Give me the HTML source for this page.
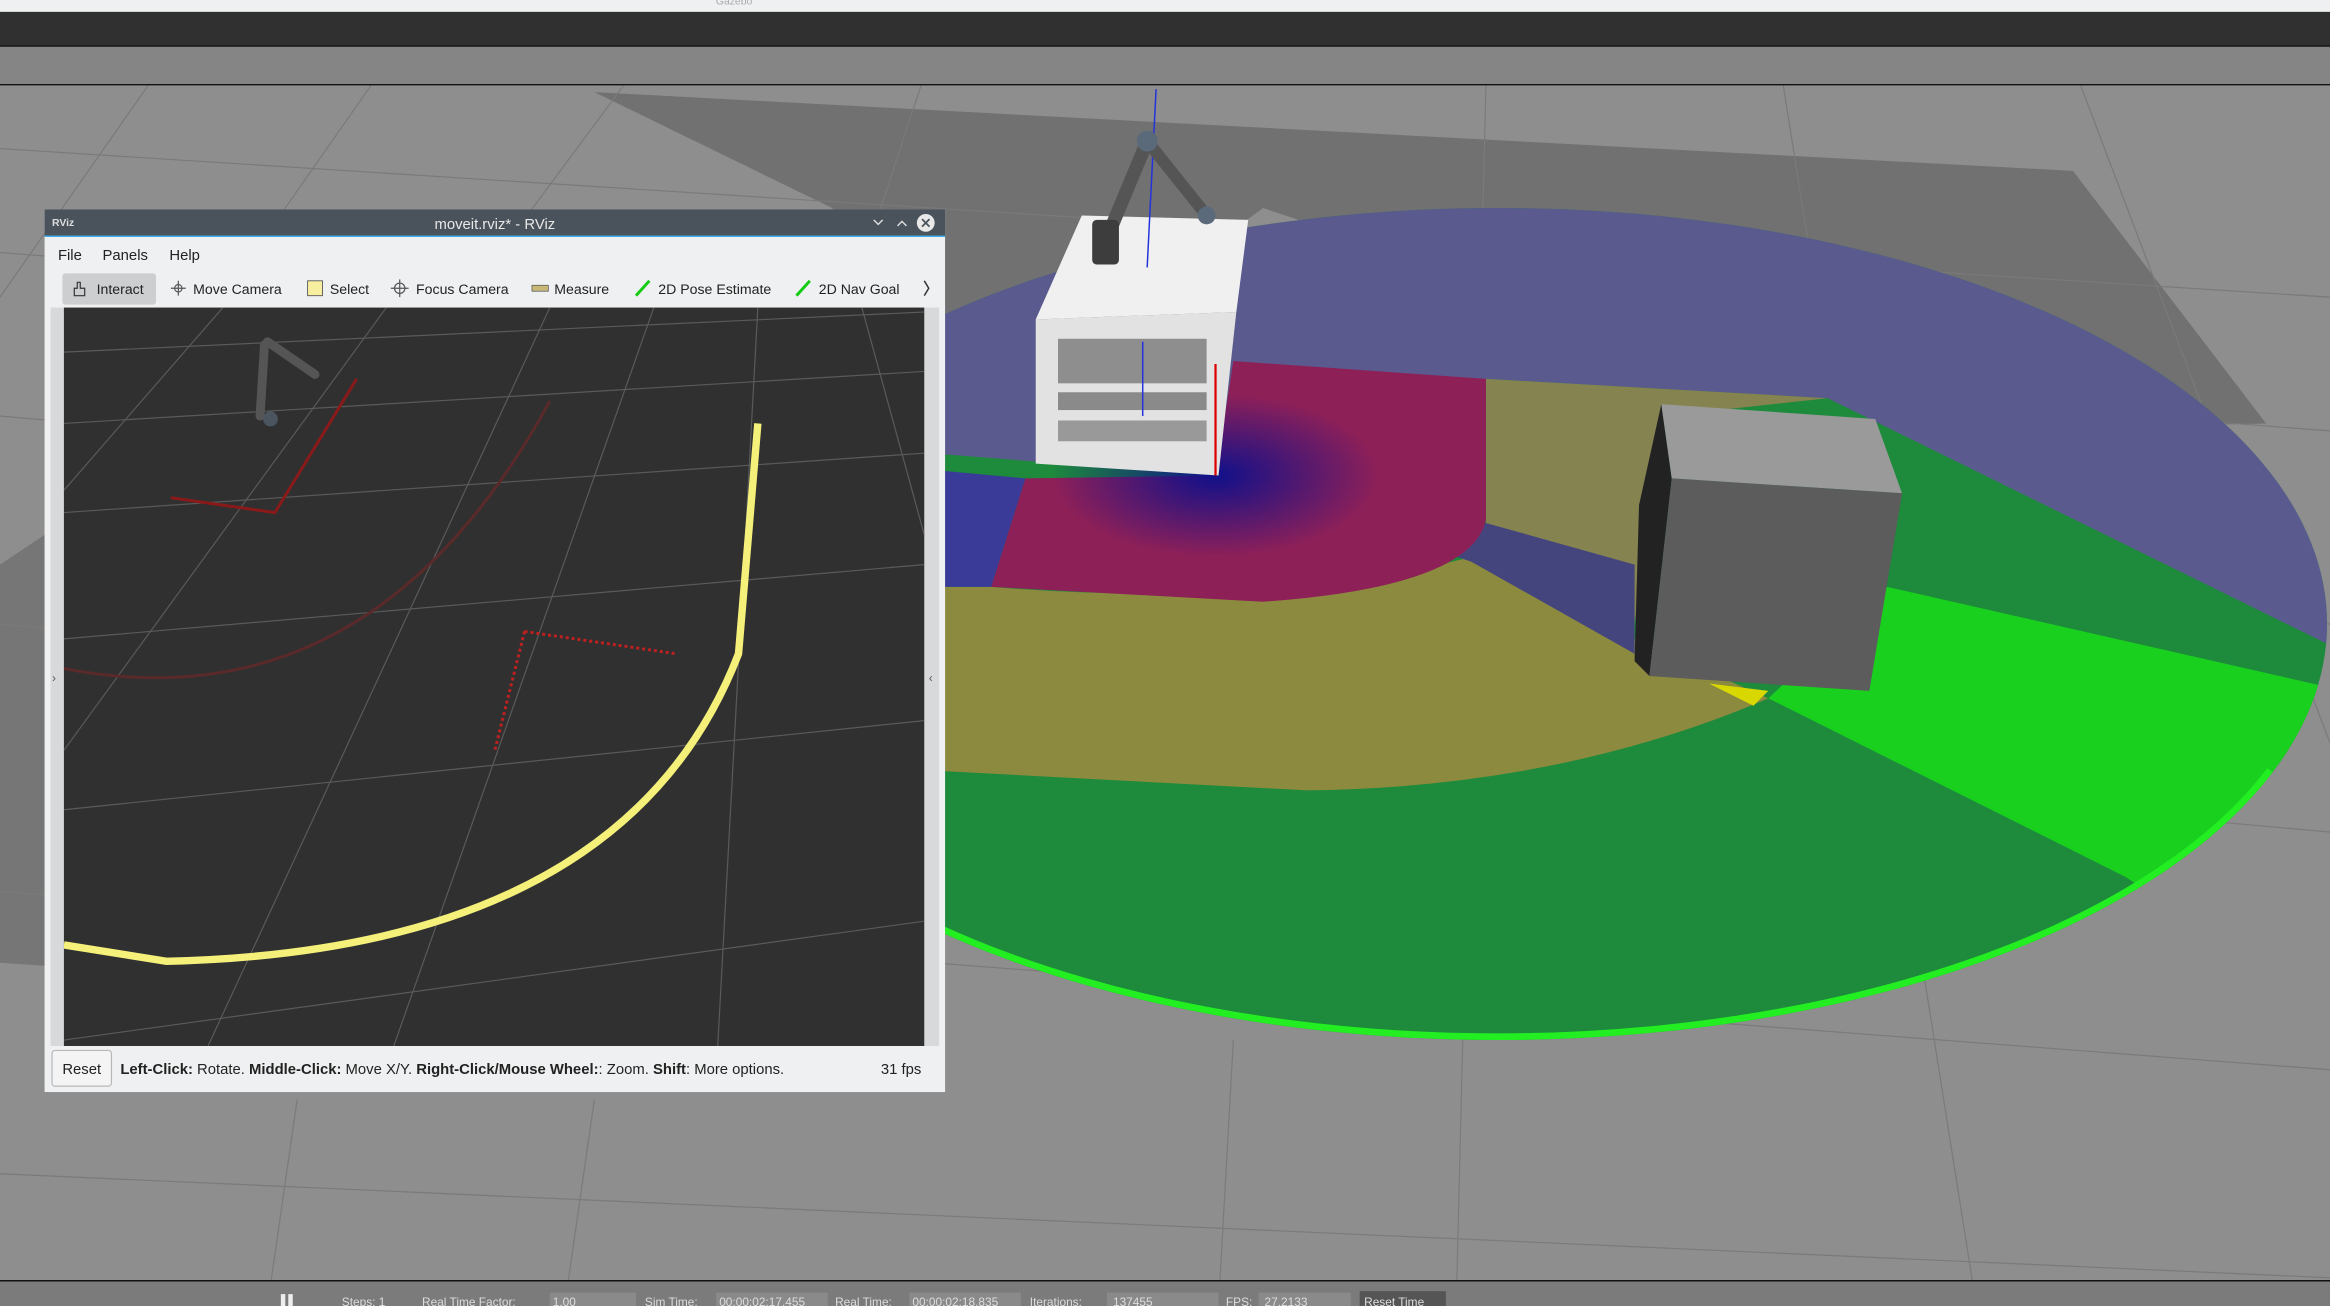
<!DOCTYPE html>
<html><head><meta charset="utf-8"><style>
html,body{margin:0;padding:0;background:#8e8e8e;overflow:hidden}
svg{display:block}
text{font-family:"Liberation Sans",sans-serif}
</style></head><body>
<svg width="2330" height="1306" viewBox="0 0 1568 879" preserveAspectRatio="none" xmlns="http://www.w3.org/2000/svg">
<defs>
<clipPath id="disk"><ellipse cx="1008" cy="420" rx="558" ry="280"/></clipPath>
<clipPath id="vp"><rect x="43" y="207" width="579" height="497"/></clipPath>
<radialGradient id="cb" cx="0.5" cy="0.5" r="0.5"><stop offset="0" stop-color="#10108a" stop-opacity="1"/><stop offset="1" stop-color="#10108a" stop-opacity="0"/></radialGradient>
</defs>
<rect x="0" y="0" width="1568" height="879" fill="#8e8e8e"/>
<polygon points="400,62 1395,115 1525,285 1300,290 850,140 700,250 640,300 560,140" fill="#717171"/>
<polygon points="0,380 30,360 30,650 0,648" fill="#767676"/>
<g stroke="#7a7a7a" stroke-width="0.8" fill="none">
<line x1="0" y1="100" x2="1568" y2="200"/><line x1="0" y1="170" x2="1568" y2="290"/>
<line x1="0" y1="280" x2="1568" y2="420"/><line x1="0" y1="420" x2="1568" y2="560"/>
<line x1="0" y1="600" x2="1568" y2="720"/><line x1="0" y1="790" x2="1568" y2="860"/>
<line x1="100" y1="57" x2="0" y2="200"/><line x1="250" y1="57" x2="80" y2="300"/>
<line x1="420" y1="57" x2="240" y2="300"/><line x1="620" y1="57" x2="540" y2="300"/>
<line x1="1000" y1="57" x2="980" y2="879"/><line x1="1200" y1="57" x2="1330" y2="879"/>
<line x1="1400" y1="57" x2="1568" y2="500"/><line x1="180" y1="879" x2="200" y2="740"/>
<line x1="380" y1="879" x2="400" y2="740"/><line x1="820" y1="879" x2="830" y2="700"/>
</g>
<rect x="0" y="0" width="1568" height="8" fill="#eff0f1"/>
<text x="494" y="3" font-size="7" fill="#aaa" text-anchor="middle">Gazebo</text>
<rect x="0" y="8" width="1568" height="23" fill="#303030"/>
<rect x="0" y="31" width="1568" height="26" fill="#858585"/>
<line x1="0" y1="31" x2="1568" y2="31" stroke="#111" stroke-width="1"/>
<line x1="0" y1="57" x2="1568" y2="57" stroke="#111" stroke-width="1"/>
<g clip-path="url(#disk)">
<rect x="400" y="100" width="1200" height="700" fill="#1d8a3c"/>
<polygon points="560,300 818,320 1000,255 1230,268 1600,450 1600,100 560,100" fill="#5a5a8e"/>
<polygon points="1270,395 1600,470 1600,700 1430,590 1190,470" fill="#1ad01e"/>
<path d="M560,395 L667,395 Q850,410 990,375 L1100,430 L1190,470 Q1050,530 880,532 L560,515 Z" fill="#8c8a3e"/>
<polygon points="1000,255 1230,268 1120,280 1100,420 1000,355" fill="#858350"/>
<polygon points="818,320 1000,352 1100,380 1100,440 990,378" fill="#45457e"/>
<path d="M818,320 L830,243 L1000,255 L1000,350 Q990,395 850,405 L667,395 L690,322 Z" fill="#8e2058"/>
<ellipse cx="818" cy="320" rx="110" ry="55" fill="url(#cb)"/>
<polygon points="560,310 690,322 667,395 560,395" fill="#3a3a98"/>
<polygon points="1150,460 1190,465 1180,475" fill="#d8d800"/>
<ellipse cx="1008" cy="420" rx="558" ry="280" fill="none" stroke="#22ee22" stroke-width="9" stroke-dasharray="0 120 1200 3000" pathLength="3000"/>
</g>
<polygon points="1118,272 1125,322 1110,455 1100,445 1103,340" fill="#222"/>
<polygon points="1118,272 1262,282 1280,332 1125,322" fill="#9a9a9a"/>
<polygon points="1125,322 1280,332 1258,465 1110,455" fill="#5c5c5c"/>
<polygon points="697,215 728,145 840,148 832,210" fill="#f0f0f0"/>
<polygon points="697,215 832,210 820,320 697,312" fill="#e2e2e2"/>
<rect x="712" y="228" width="100" height="30" fill="#8e8e8e"/>
<rect x="712" y="264" width="100" height="12" fill="#8a8a8a"/>
<rect x="712" y="283" width="100" height="14" fill="#999"/>
<line x1="778" y1="60" x2="772" y2="180" stroke="#2233dd" stroke-width="1"/>
<line x1="769" y1="230" x2="769" y2="280" stroke="#2233dd" stroke-width="1"/>
<line x1="818" y1="245" x2="818" y2="320" stroke="#dd0000" stroke-width="1.5"/>
<g stroke="#555" stroke-linecap="round" fill="none">
<line x1="745" y1="160" x2="772" y2="95" stroke-width="9"/>
<line x1="772" y1="95" x2="812" y2="145" stroke-width="8"/>
</g>
<rect x="735" y="148" width="18" height="30" rx="3" fill="#3d3d3d"/>
<circle cx="772" cy="95" r="7" fill="#5a6a7a"/><circle cx="812" cy="145" r="6" fill="#5a6a7a"/>
<rect x="0" y="862" width="1568" height="17" fill="#7b7b7b"/>
<line x1="0" y1="862" x2="1568" y2="862" stroke="#111" stroke-width="1"/>
<g font-size="8" fill="#ddd">
<rect x="189" y="871" width="3" height="8" fill="#eee"/><rect x="194" y="871" width="3" height="8" fill="#eee"/>
<text x="230" y="879">Steps: 1</text><text x="284" y="879">Real Time Factor:</text>
<rect x="370" y="870" width="58" height="9" fill="#8a8a8a"/><text x="372" y="879">1.00</text>
<text x="434" y="879">Sim Time:</text><rect x="482" y="870" width="75" height="9" fill="#8a8a8a"/><text x="484" y="879">00:00:02:17.455</text>
<text x="562" y="879">Real Time:</text><rect x="612" y="870" width="75" height="9" fill="#8a8a8a"/><text x="614" y="879">00:00:02:18.835</text>
<text x="693" y="879">Iterations:</text><rect x="745" y="870" width="75" height="9" fill="#8a8a8a"/><text x="749" y="879">137455</text>
<text x="825" y="879">FPS:</text><rect x="847" y="870" width="62" height="9" fill="#8a8a8a"/><text x="851" y="879">27.2133</text>
<rect x="915" y="869" width="58" height="10" fill="#555"/><text x="918" y="879">Reset Time</text>
</g>
<rect x="30" y="141" width="606" height="594" fill="#eff0f1"/>
<rect x="30" y="141" width="606" height="18" fill="#4a525b"/>
<line x1="30" y1="159" x2="636" y2="159" stroke="#3daee9" stroke-width="1"/>
<text x="35" y="152" font-size="7" fill="#ddd" font-weight="bold">RViz</text>
<text x="333" y="154" font-size="10" fill="#e8e8e8" text-anchor="middle">moveit.rviz* - RViz</text>
<path d="M588,148 l3,3 l3,-3 M604,152 l3,-3 l3,3" stroke="#ddd" fill="none" stroke-width="1"/>
<circle cx="623" cy="150" r="6" fill="#e8e8e8"/><path d="M620.5,147.5 l5,5 M625.5,147.5 l-5,5" stroke="#4a525b" stroke-width="1.2"/>
<g font-size="10" fill="#222">
<text x="39" y="175">File</text><text x="69" y="175">Panels</text><text x="114" y="175">Help</text>
</g>
<rect x="42" y="184" width="63" height="21" rx="2" fill="#cdcecf"/>
<g font-size="9.5" fill="#222">
<text x="65" y="198">Interact</text><text x="130" y="198">Move Camera</text><text x="222" y="198">Select</text>
<text x="280" y="198">Focus Camera</text><text x="373" y="198">Measure</text>
<text x="443" y="198">2D Pose Estimate</text><text x="551" y="198">2D Nav Goal</text>
</g>
<path d="M50,199 v-5 h2 v-4 h2 v4 h3 v5 z" stroke="#333" fill="none" stroke-width="0.8"/>
<path d="M120,189 v10 M115,194 h10" stroke="#555" stroke-width="0.8"/><circle cx="120" cy="194" r="2.5" stroke="#555" fill="none" stroke-width="0.8"/>
<rect x="207" y="189" width="10" height="10" fill="#f8eea0" stroke="#555" stroke-width="0.6"/>
<path d="M269,188 v12 M263,194 h12" stroke="#555" stroke-width="0.8"/><circle cx="269" cy="194" r="3.5" stroke="#555" fill="none" stroke-width="0.8"/>
<rect x="358" y="192" width="11" height="4" fill="#c8b878" stroke="#555" stroke-width="0.5"/>
<line x1="428" y1="199" x2="437" y2="189" stroke="#1c1" stroke-width="2"/>
<line x1="536" y1="199" x2="545" y2="189" stroke="#1c1" stroke-width="2"/>
<path d="M622,189 l3,5 l-3,5" stroke="#333" fill="none"/>
<rect x="34" y="207" width="9" height="497" fill="#d8d9da"/>
<rect x="622" y="207" width="10" height="497" fill="#d8d9da"/>
<text x="35" y="459" font-size="8" fill="#555">›</text><text x="625" y="459" font-size="8" fill="#555">‹</text>
<rect x="43" y="207" width="579" height="497" fill="#303030"/>
<g clip-path="url(#vp)">
<g stroke="#5a5a5a" stroke-width="0.8">
<line x1="43" y1="237" x2="622" y2="210"/><line x1="43" y1="285" x2="622" y2="250"/>
<line x1="43" y1="345" x2="622" y2="305"/><line x1="43" y1="430" x2="622" y2="380"/>
<line x1="43" y1="545" x2="622" y2="485"/><line x1="43" y1="700" x2="622" y2="620"/>
<line x1="150" y1="207" x2="43" y2="330"/><line x1="260" y1="207" x2="43" y2="505"/>
<line x1="370" y1="207" x2="140" y2="704"/><line x1="440" y1="207" x2="265" y2="704"/>
<line x1="510" y1="207" x2="483" y2="704"/><line x1="580" y1="207" x2="622" y2="360"/>
</g>
<path d="M43,450 Q250,490 370,270" stroke="#5a2a2a" stroke-width="2" fill="none"/>
<path d="M115,335 L185,345 L240,255" stroke="#8a1a1a" stroke-width="2" fill="none"/>
<path d="M353,425 L455,440 M353,425 L333,505" stroke="#c02020" stroke-width="2" stroke-dasharray="2,2" fill="none"/>
<path d="M43,636 L112,647 Q420,640 497,440 L510,285" stroke="#f5f07a" stroke-width="5" fill="none"/>
<g stroke="#555" stroke-width="6" stroke-linecap="round"><line x1="175" y1="280" x2="178" y2="232"/><line x1="180" y1="230" x2="212" y2="252"/></g>
<circle cx="182" cy="282" r="5" fill="#4a5560"/>
</g>
<rect x="35" y="707" width="40" height="24" rx="2" fill="#f4f4f4" stroke="#b8b8b8" stroke-width="0.8"/>
<text x="55" y="723" font-size="10" fill="#222" text-anchor="middle">Reset</text>
<text x="81" y="723" font-size="10" fill="#222"><tspan font-weight="bold">Left-Click:</tspan> Rotate. <tspan font-weight="bold">Middle-Click:</tspan> Move X/Y. <tspan font-weight="bold">Right-Click/Mouse Wheel:</tspan>: Zoom. <tspan font-weight="bold">Shift</tspan>: More options.</text>
<text x="620" y="723" font-size="10" fill="#222" text-anchor="end">31 fps</text>
</svg>
</body></html>
